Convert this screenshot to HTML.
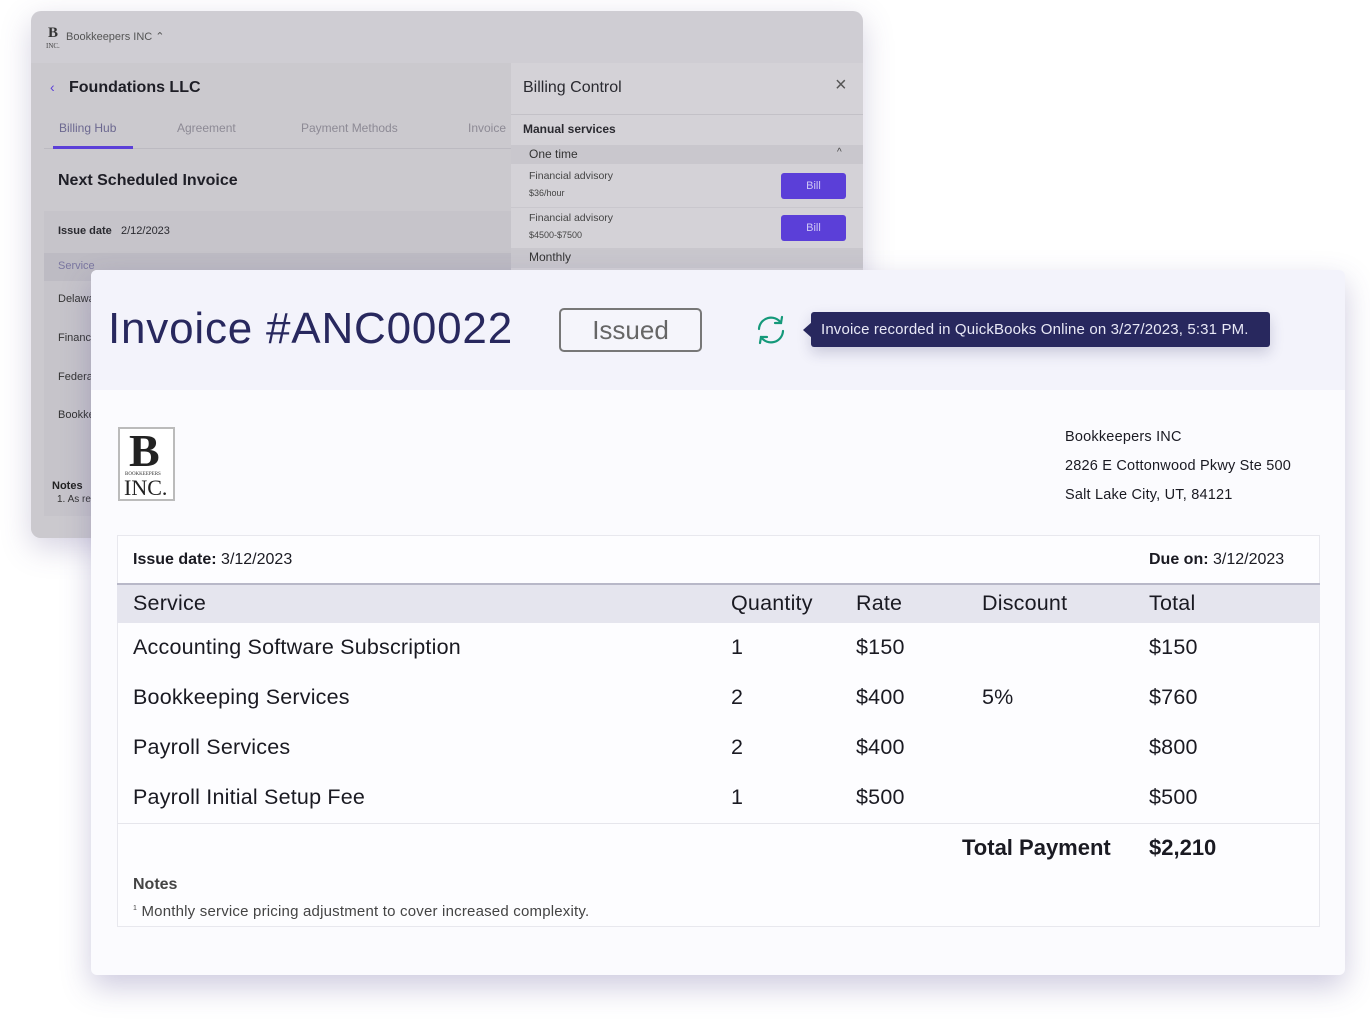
<!DOCTYPE html>
<html><head><meta charset="utf-8"><style>
*{margin:0;padding:0;box-sizing:border-box}
body{width:1370px;height:1030px;background:#fff;font-family:"Liberation Sans",sans-serif;position:relative;overflow:hidden}
.a{position:absolute;white-space:nowrap}
#back{position:absolute;left:31px;top:11px;width:832px;height:527px;background:#cfcdd3;border-radius:10px;box-shadow:0 10px 30px rgba(90,80,140,.25);overflow:hidden}
#front{position:absolute;left:91px;top:270px;width:1254px;height:705px;background:#fbfbfe;border-radius:6px;box-shadow:0 12px 30px rgba(80,70,140,.28)}
.g{color:#8d8a95}
.btn{position:absolute;width:65px;height:26px;background:#5b3fd8;border-radius:3px;color:#cfc8f5;font-size:11px;text-align:center;line-height:26px}
.t{font-size:21.5px;color:#1a1a22;letter-spacing:.2px}
</style></head><body>
<div id="back">
 <div class="a" style="left:17px;top:14px;font:bold 15px 'Liberation Serif',serif;color:#333">B</div>
 <div class="a" style="left:15px;top:31px;font:7px 'Liberation Serif',serif;color:#444">INC.</div>
 <div class="a" style="left:35px;top:19px;font-size:11px;color:#555">Bookkeepers INC &#8963;</div>
 <div class="a" style="left:0;top:52px;width:480px;height:475px;background:#cbc9ce"></div>
 <div class="a" style="left:19px;top:68px;color:#5b3fd8;font-size:14px">‹</div>
 <div class="a" style="left:38px;top:68px;font-size:16px;font-weight:bold;color:#1e1e26">Foundations LLC</div>
 <div class="a" style="left:28px;top:110px;font-size:12px;color:#6c6890">Billing Hub</div>
 <div class="a g" style="left:146px;top:110px;font-size:12px">Agreement</div>
 <div class="a g" style="left:270px;top:110px;font-size:12px">Payment Methods</div>
 <div class="a g" style="left:437px;top:110px;font-size:12px">Invoice</div>
 <div class="a" style="left:13px;top:137px;width:467px;height:1px;background:#bcbac1"></div>
 <div class="a" style="left:22px;top:135px;width:80px;height:3px;background:#5b3fd8"></div>
 <div class="a" style="left:27px;top:161px;font-size:16px;font-weight:bold;color:#1e1e26">Next Scheduled Invoice</div>
 <div class="a" style="left:13px;top:200px;width:467px;height:305px;background:#c6c4ca"></div>
 <div class="a" style="left:27px;top:214px;font-size:11px;color:#2a2a30"><b>Issue date</b>&nbsp;&nbsp; 2/12/2023</div>
 <div class="a" style="left:13px;top:242px;width:467px;height:28px;background:#bdbbc3"></div>
 <div class="a" style="left:27px;top:249px;font-size:11px;color:#7a76a0">Service</div>
 <div class="a" style="left:27px;top:282px;font-size:11px;color:#333">Delaware</div>
 <div class="a" style="left:27px;top:321px;font-size:11px;color:#333">Financial</div>
 <div class="a" style="left:27px;top:360px;font-size:11px;color:#333">Federal</div>
 <div class="a" style="left:27px;top:398px;font-size:11px;color:#333">Bookkeeping</div>
 <div class="a" style="left:21px;top:469px;font-size:11px;font-weight:bold;color:#222">Notes</div>
 <div class="a" style="left:26px;top:483px;font-size:10px;color:#333">1. As requested</div>
 <div class="a" style="left:480px;top:52px;width:352px;height:475px;background:#d4d2d7"></div>
 <div class="a" style="left:480px;top:103px;width:352px;height:1px;background:#c3c1c7"></div>
 <div class="a" style="left:492px;top:68px;font-size:16px;color:#2a2a30">Billing Control</div>
 <div class="a" style="left:804px;top:63px;font-size:20px;color:#555">×</div>
 <div class="a" style="left:492px;top:111px;font-size:12px;font-weight:bold;color:#2a2a30">Manual services</div>
 <div class="a" style="left:480px;top:134px;width:352px;height:19px;background:#c9c7cd"></div>
 <div class="a" style="left:498px;top:136px;font-size:12px;color:#333">One time</div>
 <div class="a" style="left:806px;top:136px;font-size:10px;color:#444">^</div>
 <div class="a" style="left:498px;top:159px;font-size:10.5px;color:#444">Financial advisory</div>
 <div class="a" style="left:498px;top:177px;font-size:9px;color:#444">$36/hour</div>
 <div class="btn" style="left:750px;top:162px">Bill</div>
 <div class="a" style="left:480px;top:196px;width:352px;height:1px;background:#c9c7cd"></div>
 <div class="a" style="left:498px;top:201px;font-size:10.5px;color:#444">Financial advisory</div>
 <div class="a" style="left:498px;top:219px;font-size:9px;color:#444">$4500-$7500</div>
 <div class="btn" style="left:750px;top:204px">Bill</div>
 <div class="a" style="left:480px;top:237px;width:352px;height:20px;background:#c9c7cd"></div>
 <div class="a" style="left:498px;top:239px;font-size:12px;color:#333">Monthly</div>
</div>
<div id="front">
 <div class="a" style="left:0;top:0;width:1254px;height:120px;background:#f3f3fb;border-radius:6px 6px 0 0"></div>
 <div class="a" style="left:17px;top:34px;font-size:44px;letter-spacing:.8px;color:#28285e">Invoice #ANC00022</div>
 <div class="a" style="left:468px;top:38px;width:143px;height:44px;border:2px solid #777;border-radius:5px;font-size:26px;color:#666;text-align:center;line-height:40px;background:#f5f5fb">Issued</div>
 <svg class="a" style="left:662px;top:42px" width="36" height="36" viewBox="0 0 36 36" fill="none" stroke="#15997a" stroke-width="2.2" stroke-linecap="round">
  <path d="M6 17 A12 12 0 0 1 28 11"/><path d="M29 5 L28 11 L22 11"/>
  <path d="M30 19 A12 12 0 0 1 8 25"/><path d="M7 31 L8 25 L14 25"/>
 </svg>
 <div class="a" style="left:720px;top:42px;width:459px;height:35px;background:#28285e;border-radius:3px;color:#e8e8f6;font-size:15px;letter-spacing:.15px;line-height:35px;padding-left:10px;box-shadow:0 6px 14px rgba(40,40,94,.2)">Invoice recorded in QuickBooks Online on 3/27/2023, 5:31 PM.</div>
 <div class="a" style="left:712px;top:52px;width:0;height:0;border-top:8px solid transparent;border-bottom:8px solid transparent;border-right:9px solid #28285e"></div>
 <div class="a" style="left:27px;top:157px;width:57px;height:74px;border:2px solid #bbb;background:#fff"></div>
 <div class="a" style="left:38px;top:154px;font:bold 46px 'Liberation Serif',serif;color:#222">B</div>
 <div class="a" style="left:34px;top:202px;font:5px 'Liberation Serif',serif;color:#333">BOOKKEEPERS</div>
 <div class="a" style="left:33px;top:205px;font:22px 'Liberation Serif',serif;color:#222">INC.</div>
 <div class="a" style="left:974px;top:153px;font-size:14.5px;letter-spacing:.2px;color:#1a1a22;line-height:29px">Bookkeepers INC<br>2826 E Cottonwood Pkwy Ste 500<br>Salt Lake City, UT, 84121</div>
 <div class="a" style="left:26px;top:265px;width:1203px;height:392px;border:1px solid #e8e8ee;background:#fdfdff"></div>
 <div class="a" style="left:42px;top:281px;font-size:16px;color:#1a1a22"><b>Issue date:</b> 3/12/2023</div>
 <div class="a" style="left:1058px;top:281px;font-size:16px;color:#1a1a22"><b>Due on:</b> 3/12/2023</div>
 <div class="a" style="left:26px;top:313px;width:1203px;height:40px;background:#e5e5ee;border-top:2px solid #b8b8c8"></div>
 <div class="a t" style="left:42px;top:321px">Service</div>
 <div class="a t" style="left:640px;top:321px">Quantity</div>
 <div class="a t" style="left:765px;top:321px">Rate</div>
 <div class="a t" style="left:891px;top:321px">Discount</div>
 <div class="a t" style="left:1058px;top:321px">Total</div>
 <div class="a t" style="left:42px;top:365px">Accounting Software Subscription</div><div class="a t" style="left:640px;top:365px">1</div><div class="a t" style="left:765px;top:365px">$150</div><div class="a t" style="left:1058px;top:365px">$150</div>
 <div class="a t" style="left:42px;top:415px">Bookkeeping Services</div><div class="a t" style="left:640px;top:415px">2</div><div class="a t" style="left:765px;top:415px">$400</div><div class="a t" style="left:891px;top:415px">5%</div><div class="a t" style="left:1058px;top:415px">$760</div>
 <div class="a t" style="left:42px;top:465px">Payroll Services</div><div class="a t" style="left:640px;top:465px">2</div><div class="a t" style="left:765px;top:465px">$400</div><div class="a t" style="left:1058px;top:465px">$800</div>
 <div class="a t" style="left:42px;top:515px">Payroll Initial Setup Fee</div><div class="a t" style="left:640px;top:515px">1</div><div class="a t" style="left:765px;top:515px">$500</div><div class="a t" style="left:1058px;top:515px">$500</div>
 <div class="a" style="left:26px;top:553px;width:1203px;height:1px;background:#e6e6ec"></div>
 <div class="a" style="left:871px;top:565px;font-size:22px;font-weight:bold;color:#1a1a22">Total Payment</div>
 <div class="a" style="left:1058px;top:565px;font-size:22px;font-weight:bold;color:#1a1a22">$2,210</div>
 <div class="a" style="left:42px;top:606px;font-size:16px;font-weight:bold;color:#444">Notes</div>
 <div class="a" style="left:42px;top:633px;font-size:15px;letter-spacing:.2px;color:#444"><sup style="font-size:7px">1</sup> Monthly service pricing adjustment to cover increased complexity.</div>
</div>
</body></html>
